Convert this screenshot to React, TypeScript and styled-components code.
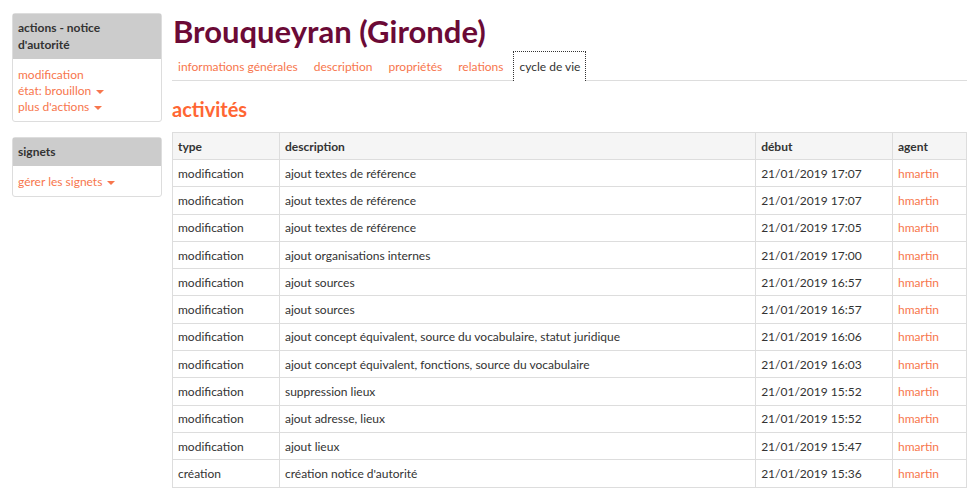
import React from 'react';
import styled, { createGlobalStyle } from 'styled-components';

const GlobalStyle = createGlobalStyle`
  body {
    margin: 0;
    background: #fff;
    font-family: Lato, "Open Sans", sans-serif;
    font-size: 12px;
    color: #333;
  }
`;

const Page = styled.div`
  display: flex;
  align-items: flex-start;
  padding: 12px 12px 0 12px;
`;

const Sidebar = styled.aside`
  width: 150px;
  flex-shrink: 0;
  display: flex;
  flex-direction: column;
  gap: 15px;
  padding-top: 1px;
`;

const Box = styled.div`
  border: 1px solid #ddd;
  border-radius: 3px;
  background: #fff;
`;

const BoxHeader = styled.div`
  background: #ccc;
  font-weight: 700;
  line-height: 17px;
  padding: 5px 24px 6px 5px;
  color: #333;
`;

const BoxBody = styled.div`
  padding: 8px 5px 6px;
  display: flex;
  flex-direction: column;
`;

const SideLink = styled.a`
  color: #f7764d;
  line-height: 16px;
  text-decoration: none;
  display: flex;
  align-items: center;
  gap: 5px;
`;

const Caret = styled.span`
  width: 0;
  height: 0;
  border-left: 4px solid transparent;
  border-right: 4px solid transparent;
  border-top: 4px solid #f7764d;
  margin-top: 2px;
`;

const Main = styled.main`
  flex: 1;
  margin-left: 10px;
  min-width: 0;
`;

const Title = styled.h1`
  margin: 0;
  font-size: 31px;
  line-height: 38px;
  font-weight: 700;
  color: #6b0a36;
  padding-left: 1px;
`;

const Tabs = styled.ul`
  list-style: none;
  margin: 1px 0 0;
  padding: 0;
  display: flex;
  gap: 4px;
  border-bottom: 1px solid #ddd;
`;

const Tab = styled.li<{ $active?: boolean }>`
  padding: 0 5px;
  height: 29px;
  display: flex;
  align-items: center;
  border: 1px dotted ${(p) => (p.$active ? '#333' : 'transparent')};
  border-bottom: none;
  color: ${(p) => (p.$active ? '#333' : '#f7764d')};
  margin-bottom: -1px;
  background: ${(p) => (p.$active ? '#fff' : 'transparent')};
`;

const Section = styled.h2`
  margin: 15px 0 0;
  font-size: 20px;
  line-height: 26px;
  font-weight: 700;
  color: #ff6633;
`;

const Table = styled.table`
  margin-top: 10px;
  width: 795px;
  border-collapse: collapse;
`;

const Th = styled.th`
  background: #f5f5f5;
  text-align: left;
  font-weight: 700;
  border: 1px solid #ddd;
  padding: 0 5px;
  height: 26px;
`;

const Td = styled.td<{ $link?: boolean }>`
  border: 1px solid #ddd;
  padding: 0 5px;
  height: 26.3px;
  color: ${(p) => (p.$link ? '#f7764d' : '#333')};
`;

const rows: [string, string, string][] = [
  ['modification', 'ajout textes de référence', '21/01/2019 17:07'],
  ['modification', 'ajout textes de référence', '21/01/2019 17:07'],
  ['modification', 'ajout textes de référence', '21/01/2019 17:05'],
  ['modification', 'ajout organisations internes', '21/01/2019 17:00'],
  ['modification', 'ajout sources', '21/01/2019 16:57'],
  ['modification', 'ajout sources', '21/01/2019 16:57'],
  ['modification', 'ajout concept équivalent, source du vocabulaire, statut juridique', '21/01/2019 16:06'],
  ['modification', 'ajout concept équivalent, fonctions, source du vocabulaire', '21/01/2019 16:03'],
  ['modification', 'suppression lieux', '21/01/2019 15:52'],
  ['modification', 'ajout adresse, lieux', '21/01/2019 15:52'],
  ['modification', 'ajout lieux', '21/01/2019 15:47'],
  ['création', "création notice d'autorité", '21/01/2019 15:36'],
];

export default function App() {
  return (
    <>
      <GlobalStyle />
      <Page>
        <Sidebar>
          <Box>
            <BoxHeader>actions - notice d'autorité</BoxHeader>
            <BoxBody>
              <SideLink>modification</SideLink>
              <SideLink>
                état: brouillon <Caret />
              </SideLink>
              <SideLink>
                plus d'actions <Caret />
              </SideLink>
            </BoxBody>
          </Box>
          <Box>
            <BoxHeader>signets</BoxHeader>
            <BoxBody>
              <SideLink>
                gérer les signets <Caret />
              </SideLink>
            </BoxBody>
          </Box>
        </Sidebar>
        <Main>
          <Title>Brouqueyran (Gironde)</Title>
          <Tabs>
            <Tab>informations générales</Tab>
            <Tab>description</Tab>
            <Tab>propriétés</Tab>
            <Tab>relations</Tab>
            <Tab $active>cycle de vie</Tab>
          </Tabs>
          <Section>activités</Section>
          <Table>
            <colgroup>
              <col style={{ width: 107 }} />
              <col style={{ width: 477 }} />
              <col style={{ width: 137 }} />
              <col style={{ width: 74 }} />
            </colgroup>
            <thead>
              <tr>
                <Th>type</Th>
                <Th>description</Th>
                <Th>début</Th>
                <Th>agent</Th>
              </tr>
            </thead>
            <tbody>
              {rows.map((r, i) => (
                <tr key={i}>
                  <Td>{r[0]}</Td>
                  <Td>{r[1]}</Td>
                  <Td>{r[2]}</Td>
                  <Td $link>hmartin</Td>
                </tr>
              ))}
            </tbody>
          </Table>
        </Main>
      </Page>
    </>
  );
}
